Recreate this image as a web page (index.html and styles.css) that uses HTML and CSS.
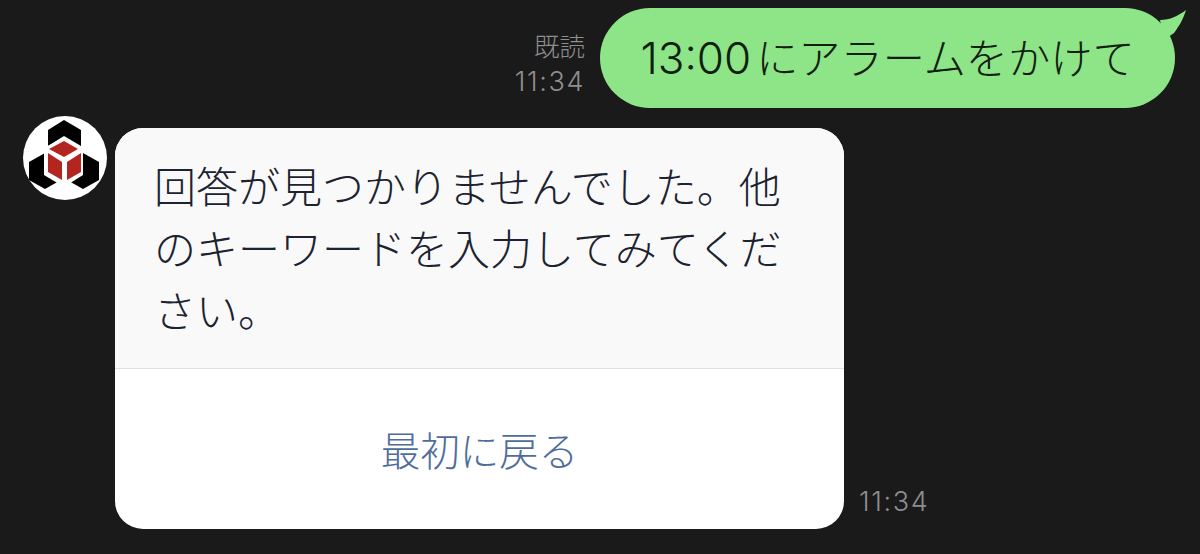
FILE: index.html
```html
<!DOCTYPE html>
<html lang="ja">
<head>
    <meta charset="UTF-8">
    <title>トーク</title>
    <link rel="stylesheet" href="styles.css">
</head>
<body>
    <div class="row-sent">
        <div class="meta">
            <span class="meta-read">既読</span>
            <span class="meta-time">11:34</span>
        </div>
        <div class="bubble">
            13:00<span class="bubble-ja">にアラームをかけて</span>
            <svg class="tail" viewBox="0 0 30 34"><path d="M4 12C14 12 22 8 30 2C27 12 23 18 18 25L8 32Z"/></svg>
        </div>
    </div>
    <div class="row-received">
        <svg class="avatar" viewBox="23 116 84 84">
            <circle cx="65" cy="158" r="42" fill="#fff"/>
            <path fill="#000" d="M64 120L81 130V146L64 136L48 146V130Z"/>
            <path fill="#000" d="M29 162L45 153L61 162V180L45 189L29 180Z"/>
            <path fill="#000" d="M99 162L83 153L67 162V180L83 189L99 180Z"/>
            <path fill="#fff" d="M64 137L83 148V175L64 187L44 175V148Z"/>
            <path fill="#b3261f" d="M64 141L78 149L64 157L49 149Z"/>
            <path fill="#b3261f" d="M48 153L62 162V180L48 172Z"/>
            <path fill="#b3261f" d="M67 162L81 153V172L67 180Z"/>
        </svg>
        <div class="card">
            <p class="card-text">回答が見つかりませんでした。他のキーワードを入力してみてください。</p>
            <div class="card-action">最初に戻る</div>
        </div>
        <span class="card-time">11:34</span>
    </div>
</body>
</html>
```

FILE: styles.css
```css
:root {
    --bg: #1a1a1a;
    --green: #8ee587;
    --meta: #8e8e8e;
    --ink: #1c2230;
    --link: #4f6d9c;
}
body {
    margin: 0;
    height: 554px;
    overflow: hidden;
    padding-top: 8px;
    box-sizing: border-box;
    background-color: var(--bg);
    font-family: "Noto Sans CJK JP", "Liberation Sans", sans-serif;
    font-weight: 300;
}
.row-sent {
    display: flex;
    justify-content: flex-end;
    align-items: flex-end;
    gap: 15px;
    padding-right: 25px;
}
.meta {
    display: flex;
    flex-direction: column;
    align-items: flex-end;
    line-height: 34px;
    color: var(--meta);
    padding-bottom: 9px;
}
.meta-read {
    font-size: 25.5px;
    margin-bottom: 3px;
}
.meta-time {
    font-family: Inter, "Liberation Sans", sans-serif;
    font-size: 27px;
    letter-spacing: 1.6px;
}
.bubble {
    position: relative;
    width: 575px;
    height: 100px;
    border-radius: 50px;
    background-color: var(--green);
    color: #10200f;
    font-family: Inter, "Liberation Sans", sans-serif;
    font-size: 44px;
    line-height: 96px;
    text-align: center;
    white-space: nowrap;
}
.bubble-ja {
    font-family: "Noto Sans CJK JP", sans-serif;
    font-size: 42.2px;
    margin-left: 5px;
}
.tail {
    position: absolute;
    top: 0;
    right: -11px;
    width: 30px;
    height: 34px;
    fill: var(--green);
}
.row-received {
    display: flex;
    align-items: flex-start;
    margin-top: 20px;
    padding-left: 23px;
}
.avatar {
    width: 84px;
    height: 84px;
    margin-top: -12px;
    margin-right: 8px;
    flex-shrink: 0;
}
.card {
    width: 729px;
    height: 401px;
    border-radius: 28px;
    overflow: hidden;
    background-color: #fff;
    display: flex;
    flex-direction: column;
}
.card-text {
    margin: 0;
    height: 241px;
    box-sizing: border-box;
    padding: 26px 47px 0 39px;
    background-color: #f9f9f9;
    border-bottom: 1px solid #dfdfe1;
    color: var(--ink);
    font-size: 42px;
    line-height: 62px;
}
.card-action {
    flex: 1;
    display: flex;
    align-items: center;
    justify-content: center;
    padding-bottom: 2px;
    color: var(--link);
    font-size: 39.5px;
}
.card-time {
    align-self: flex-end;
    margin: 0 0 10px 15px;
    color: var(--meta);
    font-family: Inter, "Liberation Sans", sans-serif;
    font-size: 27px;
    letter-spacing: 1.6px;
    line-height: 34px;
}
```
